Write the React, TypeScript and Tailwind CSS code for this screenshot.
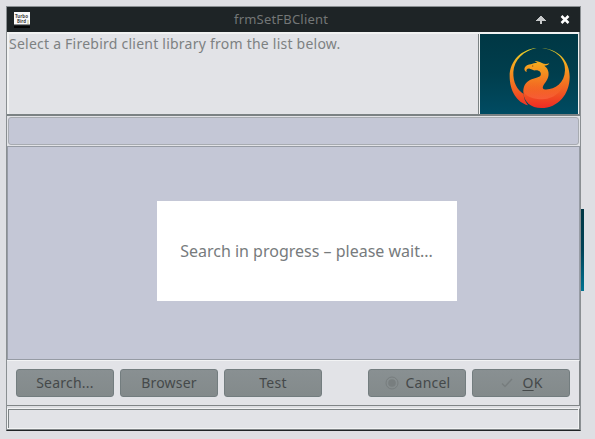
import type { ReactNode } from 'react';

function TitleBar() {
  return (
    <header className="flex h-[25px] shrink-0 items-center bg-[#1e2426] text-[13px] text-[#737676]">
      <svg className="ml-[7px] shrink-0" width="16" height="16" viewBox="0 0 16 16">
        <rect width="16" height="13" fill="#fafafa" />
        <rect y="12" width="16" height="1" fill="#8a8a8a" />
        <rect y="14" width="16" height="2" fill="#050505" />
        <text x="1" y="6" fontSize="4.5" fontWeight="bold" fontFamily="Noto Sans, sans-serif" fill="#444">Turbo</text>
        <text x="3" y="11.4" fontSize="4.5" fontWeight="bold" fontFamily="Noto Sans, sans-serif" fill="#444">Bird</text>
        <path d="M14 8v4" stroke="#c3b97c" />
      </svg>
      <h1 className="mb-[2px] ml-[204px] w-[110px] whitespace-nowrap leading-[20px] tracking-[0.2px]">frmSetFBClient</h1>
      <svg className="ml-auto mr-[14px]" width="10" height="9" viewBox="0 0 10 9" shapeRendering="crispEdges">
        <path d="M4 1h2v1h1v1h1v1h1v1h1v1H6v3H4V6H0V5h1V4h1V3h1V2h1z" fill="#c7c9ca" />
      </svg>
      <svg className="mr-[10px]" width="10" height="9" viewBox="0 0 10 9">
        <path d="M1.5 1L8.5 8M8.500 1L1.500 8" stroke="white" strokeWidth="2.5" />
      </svg>
    </header>
  );
}

function Firebird() {
  return (
    <svg width="98" height="80" viewBox="0 0 98 80">
      <defs>
        <linearGradient id="sky" x1="0" y1="0" x2="0" y2="1">
          <stop stopColor="#003744" /><stop offset=".5" stopColor="#003e4d" /><stop offset="1" stopColor="#004b62" />
        </linearGradient>
        <linearGradient id="fire" gradientUnits="userSpaceOnUse" x1="0" y1="6" x2="0" y2="186">
          <stop stopColor="#e5d42c" /><stop offset=".28" stopColor="#f5a41e" /><stop offset=".6" stopColor="#f37021" /><stop offset="1" stopColor="#ee2b24" />
        </linearGradient>
        <linearGradient id="belly" gradientUnits="userSpaceOnUse" x1="0" y1="110" x2="0" y2="160">
          <stop stopColor="#f5741f" stopOpacity="0" /><stop offset="1" stopColor="#fb6842" />
        </linearGradient>
      </defs>
      <rect width="98" height="80" fill="url(#sky)" />
      <g transform="translate(28 12) scale(.3333)">
        <path fill="url(#fire)" d="M86 6C38 10 5 46 5 91C5 135 27 170 60 178C52 167 47 157 47 144C27 132 15 109 16 78C18 42 47 14 86 6Z" />
        <path fill="url(#fire)" d="M102 6C151 9 185 45 185 92C185 145 150 186 100 186C69 186 46 167 46 137C46 119 53 109 66 102C79 96 94 96 98 88C101 79 93 72 83 73C76 74 73 70 65 68C57 67 54 72 56 78C47 74 48 65 54 60C60 55 67 55 73 53C78 50 83 51 88 51L80 45C90 45 96 48 102 51C109 55 116 55 124 52C122 57 116 59 109 59C124 69 126 90 115 105C105 119 101 126 108 130C134 134 170 115 171 73C173 38 144 12 102 6Z" />
        <path fill="url(#belly)" d="M47 138C46 111 70 105 91 103C105 101 112 91 109 75C121 89 116 102 107 113C99 123 99 129 108 132C132 134 157 121 170 93C170 131 142 158 104 160C76 160 54 151 47 138Z" opacity=".7" />
        <circle cx="74" cy="60" r="2" fill="#9d521b" />
      </g>
    </svg>
  );
}

function DialogButton({ children }: { children: ReactNode }) {
  return (
    <button className="flex h-7 w-[98px] shrink-0 items-center justify-center rounded-[3px] border border-[#737d7f] bg-gradient-to-b from-[#899092] to-[#838a8b] text-[14px] leading-[26px] tracking-[0.22px] text-[#45494a]">
      {children}
    </button>
  );
}

export default function App() {
  return (
    <div className="relative h-[439px] w-[595px] overflow-hidden bg-[#dedfe3] pl-[6px] pt-[6px] font-['Noto_Sans',sans-serif]">
      <div className="absolute left-[581px] top-[209px] h-[82px] w-[3px] bg-gradient-to-b from-[#003744] via-[#004357] to-[#007493]" />
      <main className="flex h-[425px] w-[575px] flex-col border border-b-[#1e2426] border-l-[#8a8f92] border-r-[#8a8f92] border-t-[#8a8f92]">
        <TitleBar />
        <section className="flex h-[84px] shrink-0 border-b-2 border-r border-b-[#7b8284] border-r-[#7b8284] bg-[#f1f2f2] pt-[2px]">
          <p className="ml-[2px] w-[469px] whitespace-nowrap bg-[#e2e3e7] text-[14px] leading-[19px] tracking-[0.235px] text-[#7d8182]">Select a Firebird client library from the list below.</p>
          <div className="w-px bg-[#7b8284]" />
          <div className="ml-px"><Firebird /></div>
        </section>
        <div className="flex h-[30px] shrink-0 bg-[#e2e3e7] px-px pt-px">
          <div className="h-[28px] flex-1 rounded-[3px] border border-[#a7abb1] bg-[#c4c7d6]" />
        </div>
        <section className="flex h-[214px] shrink-0 border border-[#969ba4] bg-[#c4c7d6] pl-[149px] pt-[54px]">
          <div className="flex h-[100px] w-[300px] items-center justify-center bg-white pr-px text-[16px] text-[#777b7d]">Search in progress – please wait...</div>
        </section>
        <footer className="flex h-[46px] shrink-0 gap-[6px] border-b border-r border-t border-b-[#808587] border-r-[#808587] border-t-[#f2f3f4] bg-[#e2e3e7] pl-[9px] pt-[8px]">
          <DialogButton>Search...</DialogButton>
          <DialogButton>Browser</DialogButton>
          <DialogButton>Test</DialogButton>
          <div className="w-[34px]" />
          <DialogButton>
            <svg className="mr-[6px]" width="16" height="16" viewBox="0 0 16 16">
              <circle cx="8" cy="8" r="6" fill="none" stroke="#777d7e" />
              <circle cx="8" cy="8" r="3.8" fill="#787e7f" />
            </svg>
            Cancel
          </DialogButton>
          <DialogButton>
            <svg className="mr-[7px]" width="16" height="16" viewBox="0 0 16 16">
              <path d="M3 8.5L6 11.5L13 4" fill="none" stroke="#777d7e" strokeWidth="1.4" />
            </svg>
            <span><span className="underline underline-offset-2">O</span>K</span>
          </DialogButton>
        </footer>
        <div className="h-[2px] shrink-0 bg-[#dedfe3]" />
        <div className="h-[22px] shrink-0 border-b border-r border-t border-b-[#808587] border-r-[#808587] border-t-[#f2f3f4] bg-[#f2f3f4] pl-px">
          <div className="mr-px h-[19px] border-l border-t border-[#7d8385] bg-[#e2e3e7]" />
        </div>
      </main>
    </div>
  );
}
